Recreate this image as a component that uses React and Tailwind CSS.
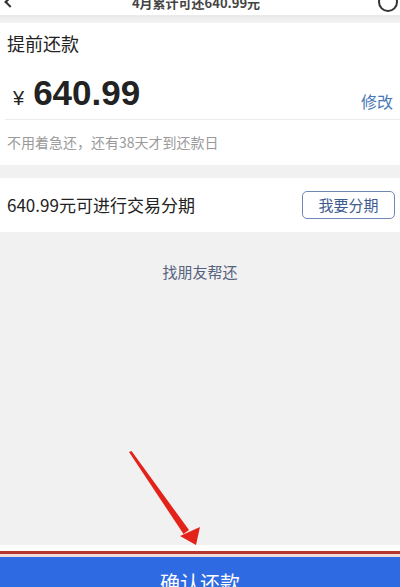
import React from 'react';

const cjk = { fontFamily: '"Noto Sans CJK SC", "Noto Sans", sans-serif' };

function RedArrow() {
  // annotation arrow drawn over the page
  return (
    <svg className="absolute left-0 top-0 pointer-events-none" width="400" height="587" viewBox="0 0 400 587">
      <polygon points="129,452 131.5,451 189,530 183.5,534" fill="#e32219" />
      <polygon points="196,545 180,536 200,527" fill="#e32219" />
    </svg>
  );
}

export default function App() {
  return (
    <div className="relative w-full h-[587px] bg-[#f1f1f1] flex flex-col overflow-hidden text-[#222]" style={cjk}>
      {/* header, cut off at top */}
      <div className="h-[15px] bg-white overflow-hidden shrink-0">
        <div className="-mt-[9px] h-[22px] flex items-center justify-between px-[4px]">
          <span className="w-[8px] h-[8px] border-l-2 border-b-2 border-[#333] rotate-45 ml-[2px]" />
          <span className="text-[13px] font-bold text-[#444] leading-none">4月累计可还640.99元</span>
          <span className="w-[20px] h-[20px] rounded-full border-2 border-[#333] -mr-[2px]" />
        </div>
      </div>
      <div className="h-[8px] shrink-0 bg-gradient-to-b from-[#e9e9e9] to-[#f3f3f3]" />

      {/* 提前还款 card */}
      <div className="bg-white h-[142px] shrink-0 flex flex-col">
        <div className="pl-[7px] pt-[7px] text-[18px] leading-[26px]">提前还款</div>
        <div className="h-[64px] ml-[5px] pr-[7px] flex items-end justify-between border-b border-[#ececec] pb-[4px]">
          <div className="flex items-baseline">
            <span className="text-[20px] ml-[8px] mr-[9px]" style={{ fontFamily: '"Liberation Sans", sans-serif' }}>¥</span>
            <span className="text-[35px] font-bold leading-[44px] text-[#222]" style={{ fontFamily: '"Liberation Sans", sans-serif' }}>640.99</span>
          </div>
          <span className="text-[16px] leading-[24px] text-[#4a78b5] mb-[2px]">修改</span>
        </div>
        <div className="flex-1 flex items-center pl-[7px] text-[14px] text-[#9a9a9a]">不用着急还，还有38天才到还款日</div>
      </div>

      <div className="h-[13px] shrink-0" />

      {/* 分期 row */}
      <div className="bg-white h-[54px] shrink-0 flex items-center justify-between pl-[7px] pr-[5px]">
        <span className="text-[17px]">640.99元可进行交易分期</span>
        <button type="button" className="w-[93px] h-[28px] rounded-[5px] border-[1.5px] border-[#6f88b3] text-[15px] text-[#3d5b8f] flex items-center justify-center">
          我要分期
        </button>
      </div>

      <div className="mt-[30px] text-center text-[15px] leading-[20px] text-[#56627c]">找朋友帮还</div>

      <div className="flex-1" />

      {/* bottom confirm */}
      <div className="shrink-0 h-[42px] flex flex-col">
        <div className="h-[6px] bg-white" />
        <div className="h-[3px] bg-[#b5372c]" />
        <div className="h-[3px] bg-[#f2d9dc]" />
        <div className="flex-1 bg-[#2e6be3] overflow-hidden flex justify-center">
          <span className="text-[20px] leading-[28px] text-white pt-[12px]">确认还款</span>
        </div>
      </div>

      <RedArrow />
    </div>
  );
}
